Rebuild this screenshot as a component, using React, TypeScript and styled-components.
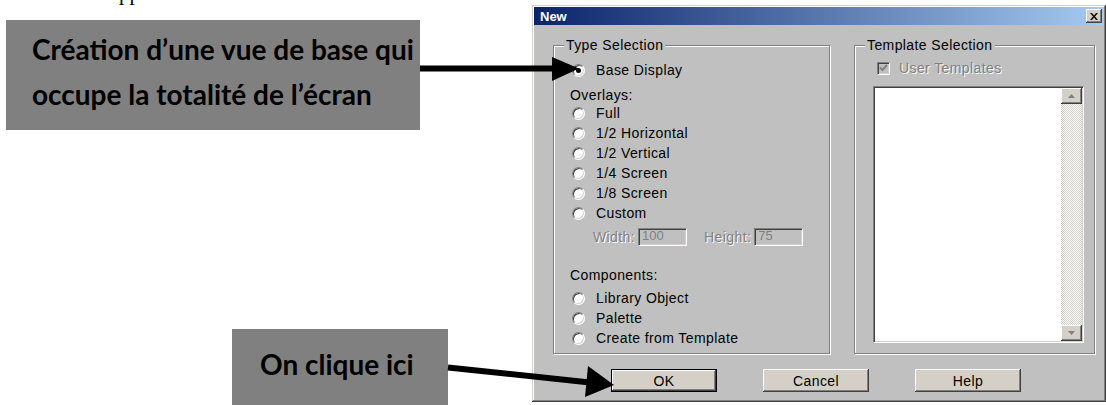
import React from 'react';
import styled, { createGlobalStyle } from 'styled-components';

interface Option {
  label: string;
  checked?: boolean;
}

const overlays: Option[] = [
  { label: 'Full' },
  { label: '1/2 Horizontal' },
  { label: '1/2 Vertical' },
  { label: '1/4 Screen' },
  { label: '1/8 Screen' },
  { label: 'Custom' },
];

const components: Option[] = [
  { label: 'Library Object' },
  { label: 'Palette' },
  { label: 'Create from Template' },
];

const Radio: React.FC<Option> = ({ label, checked }) => (
  <RadioRow>
    <RadioMark $on={checked} />
    <span>{label}</span>
  </RadioRow>
);

const ScrollArrow: React.FC<{ down?: boolean }> = ({ down }) => (
  <svg width="7" height="4" viewBox="0 0 7 4">
    <polygon points={down ? '0,0 7,0 3.5,4' : '0,4 7,4 3.5,0'} fill="#808080" />
  </svg>
);

const App: React.FC = () => (
  <>
    <GlobalStyle />
    <Page>
      <Notes>
        <Lead>Une fenêtre apparaît</Lead>
        <Callout $width={414} $height={110} $top={15} $left={6} $padTop={7} $padLeft={26}>
          Création d’une vue de base qui
          <br />
          occupe la totalité de l’écran
        </Callout>
        <Callout $width={216} $height={90} $top={199} $left={232} $padTop={13} $padLeft={28}>
          On clique ici
        </Callout>
      </Notes>

      <Dialog>
        <TitleBar>
          <Title>New</Title>
          <CloseButton aria-label="Close">
            <svg width="8" height="7" viewBox="0 0 8 7">
              <path d="M0 0h2l2 2.4L6 0h2L5 3.5 8 7H6L4 4.6 2 7H0l3-3.5z" fill="#000" />
            </svg>
          </CloseButton>
        </TitleBar>

        <Body>
          <Groups>
            <Group $width={277}>
              <Legend>Type Selection</Legend>
              <TypeList>
                <Radio label="Base Display" checked />
                <Caption $gap={7}>Overlays:</Caption>
                {overlays.map(o => (
                  <Radio key={o.label} {...o} />
                ))}
                <SizeRow>
                  <Muted>Width:</Muted>
                  <Field>100</Field>
                  <Muted $gap={14}>Height:</Muted>
                  <Field>75</Field>
                </SizeRow>
                <Caption $gap={21}>Components:</Caption>
                <Spacer />
                {components.map(o => (
                  <Radio key={o.label} {...o} />
                ))}
              </TypeList>
            </Group>

            <Group $width={241}>
              <Legend>Template Selection</Legend>
              <TemplatePane>
                <CheckRow>
                  <CheckMark>
                    <svg width="9" height="8" viewBox="0 0 9 8">
                      <polyline points="1,3.5 3.5,6 8,1" fill="none" stroke="#808080" strokeWidth="2" />
                    </svg>
                  </CheckMark>
                  <Muted>User Templates</Muted>
                </CheckRow>
                <ListBox>
                  <ListArea />
                  <ScrollBar>
                    <ScrollButton>
                      <ScrollArrow />
                    </ScrollButton>
                    <Track />
                    <ScrollButton>
                      <ScrollArrow down />
                    </ScrollButton>
                  </ScrollBar>
                </ListBox>
              </TemplatePane>
            </Group>
          </Groups>

          <Buttons>
            <PushButton $default>OK</PushButton>
            <PushButton>Cancel</PushButton>
            <PushButton>Help</PushButton>
          </Buttons>
        </Body>
      </Dialog>

      <Arrows width={1106} height={405} viewBox="0 0 1106 405">
        <line x1={420} y1={68.5} x2={556} y2={68.5} stroke="#000" strokeWidth={6} />
        <polygon points="552,57 579,68.5 552,81" fill="#000" />
        <line x1={448} y1={367.6} x2={590} y2={382.4} stroke="#000" strokeWidth={6} />
        <polygon points="588,366 614,385 585,397" fill="#000" />
      </Arrows>
    </Page>
  </>
);

const GlobalStyle = createGlobalStyle`
  html, body {
    margin: 0;
    padding: 0;
    background: #fff;
  }
`;

const Page = styled.div`
  position: relative;
  width: 1106px;
  height: 405px;
  overflow: hidden;
  display: grid;
  grid-template-columns: 532px 574px;
  align-items: start;
  background: #fff;
`;

const Notes = styled.div`
  display: flex;
  flex-direction: column;
  align-items: flex-start;
`;

const Lead = styled.div`
  height: 5px;
  overflow: hidden;
  display: flex;
  align-items: flex-end;
  padding-left: 6px;
  font-family: 'Liberation Serif', serif;
  font-size: 21px;
  line-height: 1.15;
  color: #000;
  white-space: nowrap;
`;

const Callout = styled.div<{
  $width: number;
  $height: number;
  $top: number;
  $left: number;
  $padTop: number;
  $padLeft: number;
}>`
  box-sizing: border-box;
  flex: none;
  width: ${p => p.$width}px;
  height: ${p => p.$height}px;
  margin: ${p => p.$top}px 0 0 ${p => p.$left}px;
  padding: ${p => p.$padTop}px 0 0 ${p => p.$padLeft}px;
  background: #808080;
  color: #000;
  font-family: Lato, 'Open Sans', sans-serif;
  font-weight: 700;
  font-size: 28px;
  line-height: 45px;
  white-space: nowrap;
`;

const Dialog = styled.div`
  box-sizing: border-box;
  margin-top: 5px;
  width: 574px;
  padding: 2px;
  background: #c0c0c0;
  box-shadow: inset -1px -1px #404040, inset 1px 1px #d4d0c8, inset -2px -2px #808080,
    inset 2px 2px #fff;
  font-family: 'Liberation Sans', Arial, sans-serif;
  font-size: 14px;
  letter-spacing: 0.4px;
  color: #000;
`;

const TitleBar = styled.div`
  height: 18px;
  display: flex;
  align-items: center;
  justify-content: space-between;
  padding: 0 2px 0 6px;
  background: linear-gradient(to right, #0a246a, #a6caf0);
`;

const Title = styled.span`
  color: #fff;
  font-weight: 700;
  font-size: 13px;
  letter-spacing: 0;
`;

const CloseButton = styled.span`
  width: 16px;
  height: 14px;
  display: flex;
  align-items: center;
  justify-content: center;
  background: #d4d0c8;
  box-shadow: inset -1px -1px #404040, inset 1px 1px #fff, inset -2px -2px #808080;
`;

const Body = styled.div`
  padding: 12px 0 8px 19px;
`;

const Groups = styled.div`
  display: flex;
  gap: 24px;
`;

const Group = styled.fieldset<{ $width: number }>`
  box-sizing: border-box;
  width: ${p => p.$width}px;
  min-width: 0;
  margin: 0;
  padding: 0;
  border: 1px solid #808080;
  box-shadow: inset 1px 1px #fff, 1px 1px #fff;
  display: flex;
  flex-direction: column;
`;

const Legend = styled.legend`
  margin-left: 10px;
  padding: 0 2px;
  line-height: 16px;
  background: #c0c0c0;
`;

const TypeList = styled.div`
  display: flex;
  flex-direction: column;
  padding: 7px 0 5px 18px;
`;

const RadioRow = styled.div`
  height: 20px;
  display: flex;
  align-items: center;
  gap: 11px;
  white-space: nowrap;
`;

const RadioMark = styled.span<{ $on?: boolean }>`
  box-sizing: border-box;
  flex: none;
  width: 13px;
  height: 13px;
  border-radius: 50%;
  border: 1px solid;
  border-color: #808080 #fff #fff #808080;
  background: #fff;
  box-shadow: inset 1px 1px #404040, inset -1px -1px #d4d0c8;
  display: flex;
  align-items: center;
  justify-content: center;

  &::after {
    content: '';
    display: ${p => (p.$on ? 'block' : 'none')};
    width: 5px;
    height: 5px;
    border-radius: 50%;
    background: #000;
  }
`;

const Caption = styled.div<{ $gap: number }>`
  margin: ${p => p.$gap}px 0 0 -2px;
  line-height: 16px;
`;

const Spacer = styled.div`
  height: 5px;
`;

const SizeRow = styled.div`
  height: 18px;
  margin-top: 5px;
  padding-left: 21px;
  display: flex;
  align-items: center;
  gap: 3px;
`;

const Muted = styled.span<{ $gap?: number }>`
  margin-left: ${p => p.$gap || 0}px;
  color: #808080;
  text-shadow: 1px 1px 0 #fff;
  white-space: nowrap;
`;

const Field = styled.div`
  box-sizing: border-box;
  width: 49px;
  height: 18px;
  padding: 0 3px;
  font-size: 13px;
  line-height: 14px;
  letter-spacing: 0;
  color: #808080;
  background: #c0c0c0;
  border: 1px solid;
  border-color: #808080 #fff #fff #808080;
  box-shadow: inset 1px 1px #404040, inset -1px -1px #d4d0c8;
`;

const TemplatePane = styled.div`
  flex: 1;
  display: flex;
  flex-direction: column;
  padding: 7px 10px 10px 18px;
`;

const CheckRow = styled.div`
  height: 16px;
  margin-left: 4px;
  display: flex;
  align-items: center;
  gap: 9px;
`;

const CheckMark = styled.span`
  box-sizing: border-box;
  width: 13px;
  height: 13px;
  display: flex;
  align-items: center;
  justify-content: center;
  background: #c0c0c0;
  border: 1px solid;
  border-color: #808080 #fff #fff #808080;
  box-shadow: inset 1px 1px #404040, inset -1px -1px #d4d0c8;
`;

const ListBox = styled.div`
  flex: 1;
  margin-top: 10px;
  display: flex;
  padding: 1px;
  background: #fff;
  border: 1px solid;
  border-color: #808080 #fff #fff #808080;
  box-shadow: inset 1px 1px #404040, inset -1px -1px #d4d0c8;
`;

const ListArea = styled.div`
  flex: 1;
`;

const ScrollBar = styled.div`
  width: 21px;
  display: flex;
  flex-direction: column;
`;

const ScrollButton = styled.div`
  height: 16px;
  display: flex;
  align-items: center;
  justify-content: center;
  background: #d4d0c8;
  box-shadow: inset -1px -1px #404040, inset 1px 1px #fff, inset -2px -2px #808080;
`;

const Track = styled.div`
  flex: 1;
  background-color: #fff;
  background-image: repeating-conic-gradient(#d4d0c8 0 25%, #fff 0 50%);
  background-size: 2px 2px;
`;

const Buttons = styled.div`
  display: flex;
  gap: 46px;
  margin: 15px 0 0 58px;
`;

const PushButton = styled.button<{ $default?: boolean }>`
  box-sizing: border-box;
  width: 106px;
  height: 23px;
  padding: 0;
  font: inherit;
  letter-spacing: 0.4px;
  color: #000;
  background: #d4d0c8;
  border: ${p => (p.$default ? '1px solid #000' : 'none')};
  box-shadow: inset -1px -1px #404040, inset 1px 1px #fff, inset -2px -2px #808080;
`;

const Arrows = styled.svg`
  position: absolute;
  left: 0;
  top: 0;
  pointer-events: none;
`;

export default App;
